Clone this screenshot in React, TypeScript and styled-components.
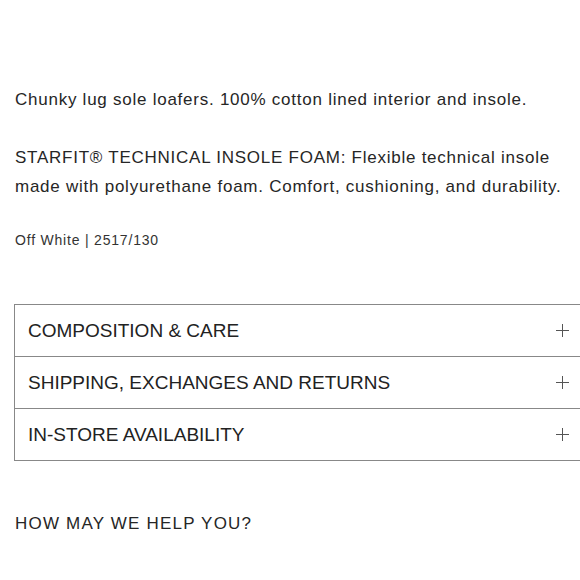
import React from "react";
import styled, { createGlobalStyle } from "styled-components";

const Global = createGlobalStyle`
  html, body { margin: 0; padding: 0; background: #fff; }
  body { font-family: "Liberation Sans", Arial, sans-serif; color: #262626; }
`;

const Page = styled.div`
  width: 580px;
  height: 580px;
  overflow: hidden;
  box-sizing: border-box;
  padding: 85px 0 0 15px;
`;

const Paragraph = styled.p`
  margin: 0 0 29px;
  font-size: 17px;
  line-height: 29px;
  letter-spacing: 0.75px;
  color: #262626;
`;

const Reference = styled.p`
  margin: 0;
  font-size: 14px;
  line-height: 20px;
  letter-spacing: 0.8px;
  color: #333;
`;

const Accordion = styled.div`
  margin: 54px 0 0 -1px;
  border: 1px solid #888;
  border-right: none;
  border-bottom: none;
  width: 600px;
`;

const Row = styled.div`
  display: flex;
  align-items: center;
  justify-content: space-between;
  height: 51px;
  border-bottom: 1px solid #888;
  padding: 0 0 0 13px;
`;

const RowLabel = styled.span`
  font-size: 19px;
  color: #222;
`;

const Plus = styled.svg`
  width: 13px;
  height: 13px;
  margin-right: 46px;
`;

const Help = styled.h2`
  margin: 53px 0 0;
  font-size: 17px;
  font-weight: normal;
  letter-spacing: 1.2px;
  color: #262626;
`;

const rows = [
  "COMPOSITION & CARE",
  "SHIPPING, EXCHANGES AND RETURNS",
  "IN-STORE AVAILABILITY",
];

export default function App() {
  return (
    <Page>
      <Global />
      <Paragraph>Chunky lug sole loafers. 100% cotton lined interior and insole.</Paragraph>
      <Paragraph>
        STARFIT® TECHNICAL INSOLE FOAM: Flexible technical insole
        <br />
        made with polyurethane foam. Comfort, cushioning, and durability.
      </Paragraph>
      <Reference>Off White | 2517/130</Reference>
      <Accordion>
        {rows.map((r) => (
          <Row key={r}>
            <RowLabel>{r}</RowLabel>
            <Plus viewBox="0 0 13 13">
              <path d="M6.5 0V13M0 6.5H13" stroke="#555" strokeWidth="1" />
            </Plus>
          </Row>
        ))}
      </Accordion>
      <Help>HOW MAY WE HELP YOU?</Help>
    </Page>
  );
}
